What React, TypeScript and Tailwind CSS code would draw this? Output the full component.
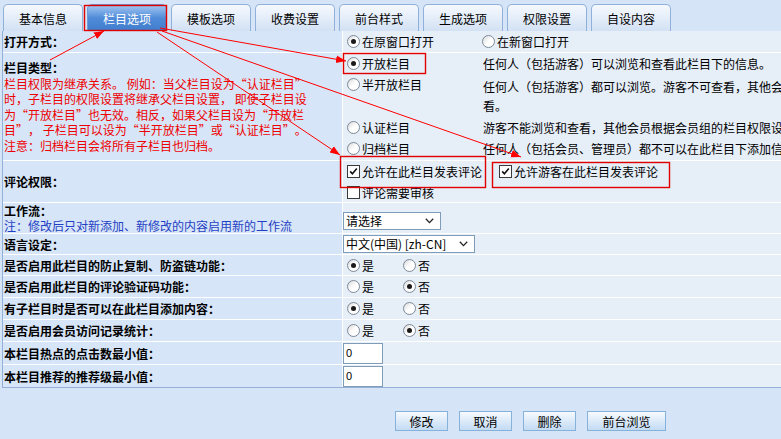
import React from 'react'

const tabs = ['基本信息', '栏目选项', '模板选项', '收费设置', '前台样式', '生成选项', '权限设置', '自设内容']

function Radio({ checked }: { checked?: boolean }) {
  return (
    <span className="inline-flex h-[13px] w-[13px] shrink-0 items-center justify-center rounded-full border border-[#7d8a98] bg-gradient-to-br from-[#d8d8d8] via-white to-white">
      {checked && <span className="h-[5px] w-[5px] rounded-full bg-[#1a1a1a]" />}
    </span>
  )
}

function Check({ checked }: { checked?: boolean }) {
  return (
    <span className="inline-flex h-[13px] w-[13px] shrink-0 items-center justify-center border border-[#3a3a3a] bg-white">
      {checked && (
        <svg width="9" height="9" viewBox="0 0 9 9">
          <path d="M1.2 4.4 L3.4 6.8 L7.8 1.6" fill="none" stroke="#111" strokeWidth="1.6" />
        </svg>
      )}
    </span>
  )
}

// full-width curly quotes, like the old CJK system fonts draw them
const L = () => <span className="inline-block w-[12px] text-right">“</span>
const R = () => <span className="inline-block w-[12px] text-left">”</span>

function RadioText({ checked, text }: { checked?: boolean; text: string }) {
  return (
    <span className="flex items-center gap-[2px] whitespace-nowrap">
      <Radio checked={checked} />
      <span>{text}</span>
    </span>
  )
}

function YesNo({ yes }: { yes: boolean }) {
  return (
    <div className="flex h-full items-center pl-[4px]">
      <div className="w-[56px]">
        <RadioText checked={yes} text="是" />
      </div>
      <RadioText checked={!yes} text="否" />
    </div>
  )
}

function Select({ text, width }: { text: string; width: string }) {
  return (
    <div className={`flex h-[18px] items-center justify-between border border-[#7f9db9] bg-white pl-[2px] pr-[6px] ${width}`}>
      <span className="whitespace-nowrap leading-none">{text}</span>
      <svg width="9" height="6" viewBox="0 0 9 6">
        <path d="M0.8 0.8 L4.5 4.6 L8.2 0.8" fill="none" stroke="#222" strokeWidth="1.3" />
      </svg>
    </div>
  )
}

function NumInput() {
  return (
    <div className="flex h-[21px] w-[40px] items-center border border-[#7f9db9] bg-white pl-[2px] font-['Liberation_Sans',sans-serif] text-[11px]">
      0
    </div>
  )
}

function Row({ h, left, children }: { h: string; left: React.ReactNode; children?: React.ReactNode }) {
  return (
    <div className={`flex gap-px ${h}`}>
      <div className="flex w-[339px] shrink-0 items-center bg-[#d6e5f7] pl-px">
        <div>{left}</div>
      </div>
      <div className="flex-1 bg-[#e6eef8]">{children}</div>
    </div>
  )
}

const bold = 'font-bold text-black whitespace-nowrap'

export default function App() {
  return (
    <div className="relative h-[439px] w-[781px] overflow-hidden bg-[#d5e4f6] font-['Noto_Sans_CJK_SC',sans-serif] text-[12px] leading-[15px] text-black">
      {/* Tabs */}
      <div className="flex h-[31px] items-end gap-[4px] pl-[3px]">
        {tabs.map((t, i) => (
          <div
            key={t}
            className={
              i === 1
                ? 'flex h-[27px] w-[80px] shrink-0 items-center justify-center rounded-t-[5px] border border-b-0 border-[#6f9bd3] bg-gradient-to-b from-[#a5c8f3] via-[#4f8bd8] to-[#3f7dcd] text-[12px] text-white'
                : 'flex h-[27px] w-[80px] shrink-0 items-center justify-center rounded-t-[5px] border border-b-0 border-[#8fb0d9] bg-gradient-to-b from-[#f6f9fe] to-[#d2e1f4] text-[12px]'
            }
          >
            {t}
          </div>
        ))}
      </div>

      {/* Form table */}
      <div className="ml-[2px] flex w-[1060px] flex-col gap-px border-b border-l border-[#93b1d8] bg-white">
        <Row h="h-[21px]" left={<span className={bold}>打开方式：</span>}>
          <div className="flex h-full items-center pl-[4px]">
            <div className="w-[135px]">
              <RadioText checked text="在原窗口打开" />
            </div>
            <RadioText text="在新窗口打开" />
          </div>
        </Row>

        <Row
          h="h-[107px]"
          left={
            <div className="whitespace-nowrap leading-[15.5px]">
              <div className={bold}>栏目类型：</div>
              <div className="text-[#ee0000]">
                <div>
                  栏目权限为继承关系。 例如：当父栏目设为<L />认证栏目<R />
                </div>
                <div>时，子栏目的权限设置将继承父栏目设置， 即使子栏目设</div>
                <div>
                  为<L />开放栏目<R />也无效。相反，如果父栏目设为<L />开放栏
                </div>
                <div>
                  目<R />， 子栏目可以设为<L />半开放栏目<R />或<L />认证栏目<R />。
                </div>
                <div>注意：归档栏目会将所有子栏目也归档。</div>
              </div>
            </div>
          }
        >
          <div className="flex flex-col pl-[4px] whitespace-nowrap">
            <div className="flex h-[21px] items-center">
              <div className="w-[136px]">
                <RadioText checked text="开放栏目" />
              </div>
              <span>任何人（包括游客）可以浏览和查看此栏目下的信息。</span>
            </div>
            <div className="flex h-[43px] pt-[3px]">
              <div className="w-[136px]">
                <RadioText text="半开放栏目" />
              </div>
              <div className="leading-[19px]">
                <div>任何人（包括游客）都可以浏览。游客不可查看，其他会员根据会员组的栏目权限设置决定是否可以查</div>
                <div>看。</div>
              </div>
            </div>
            <div className="flex h-[21px] items-center">
              <div className="w-[136px]">
                <RadioText text="认证栏目" />
              </div>
              <span>游客不能浏览和查看，其他会员根据会员组的栏目权限设置决定是否可以浏览和查看。</span>
            </div>
            <div className="flex h-[21px] items-center">
              <div className="w-[136px]">
                <RadioText text="归档栏目" />
              </div>
              <span>任何人（包括会员、管理员）都不可以在此栏目下添加信息。</span>
            </div>
          </div>
        </Row>

        <Row h="h-[41px]" left={<span className={bold}>评论权限：</span>}>
          <div className="flex flex-col pl-[4px] whitespace-nowrap">
            <div className="flex h-[21px] items-center">
              <span className="flex items-center gap-[2px]">
                <Check checked />
                <span>允许在此栏目发表评论</span>
              </span>
              <span className="ml-[17px] flex items-center gap-[2px]">
                <Check checked />
                <span>允许游客在此栏目发表评论</span>
              </span>
            </div>
            <div className="flex h-[20px] items-center">
              <span className="flex items-center gap-[2px]">
                <Check />
                <span>评论需要审核</span>
              </span>
            </div>
          </div>
        </Row>

        <Row
          h="h-[30px]"
          left={
            <div className="whitespace-nowrap">
              <div className={bold}>工作流：</div>
              <div className="text-[#1f3fc4]">注：修改后只对新添加、新修改的内容启用新的工作流</div>
            </div>
          }
        >
          <div className="flex h-full items-center pt-[5px]">
            <Select text="请选择" width="w-[98px]" />
          </div>
        </Row>

        <Row h="h-[20px]" left={<span className={bold}>语言设定：</span>}>
          <div className="flex h-full items-center">
            <Select text="中文(中国) [zh-CN]" width="w-[132px]" />
          </div>
        </Row>

        <Row h="h-[20px]" left={<span className={bold}>是否启用此栏目的防止复制、防盗链功能：</span>}>
          <YesNo yes />
        </Row>
        <Row h="h-[21px]" left={<span className={bold}>是否启用此栏目的评论验证码功能：</span>}>
          <YesNo yes={false} />
        </Row>
        <Row h="h-[21px]" left={<span className={bold}>有子栏目时是否可以在此栏目添加内容：</span>}>
          <YesNo yes />
        </Row>
        <Row h="h-[21px]" left={<span className={bold}>是否启用会员访问记录统计：</span>}>
          <YesNo yes={false} />
        </Row>
        <Row h="h-[22px]" left={<span className={bold}>本栏目热点的点击数最小值：</span>}>
          <div className="flex h-full items-center">
            <NumInput />
          </div>
        </Row>
        <Row h="h-[22px]" left={<span className={bold}>本栏目推荐的推荐级最小值：</span>}>
          <div className="flex h-full items-center">
            <NumInput />
          </div>
        </Row>
      </div>

      {/* Buttons */}
      <div className="mt-[23px] flex gap-[11px] pl-[395px]">
        {['修改', '取消', '删除', '前台浏览'].map((b) => (
          <button
            key={b}
            className={`flex h-[20px] items-center justify-center border border-[#86b1da] bg-gradient-to-b from-[#f6faff] to-[#c3dbf3] text-[12px] ${
              b === '前台浏览' ? 'w-[79px]' : 'w-[53px]'
            }`}
          >
            {b}
          </button>
        ))}
      </div>

      {/* Red annotation overlay */}
      <svg className="pointer-events-none absolute left-0 top-0" width="781" height="439">
        <defs>
          <marker id="ah" viewBox="0 0 10 10" refX="10" refY="5" markerWidth="10" markerHeight="10" markerUnits="userSpaceOnUse" orient="auto">
            <path d="M0 1.2 L10 5 L0 8.8 z" fill="#ff0000" />
          </marker>
        </defs>
        <rect x="84.5" y="5.5" width="82" height="25" fill="none" stroke="#e00000" strokeWidth="1.4" />
        <rect x="343.5" y="53.5" width="82" height="20" fill="none" stroke="#e00000" strokeWidth="1.4" />
        <rect x="340.5" y="156.5" width="145" height="31" fill="none" stroke="#e00000" strokeWidth="1.4" />
        <rect x="492.5" y="162.5" width="177" height="25" fill="none" stroke="#e00000" strokeWidth="1.4" />
        <line x1="50" y1="60" x2="104" y2="31" stroke="#ff0000" strokeWidth="1" markerEnd="url(#ah)" />
        <line x1="160" y1="28" x2="346" y2="61" stroke="#ff0000" strokeWidth="1" markerEnd="url(#ah)" />
        <line x1="157" y1="32" x2="340" y2="155" stroke="#ff0000" strokeWidth="1" markerEnd="url(#ah)" />
        <line x1="162" y1="31" x2="521" y2="157" stroke="#ff0000" strokeWidth="1" markerEnd="url(#ah)" />
      </svg>
    </div>
  )
}
